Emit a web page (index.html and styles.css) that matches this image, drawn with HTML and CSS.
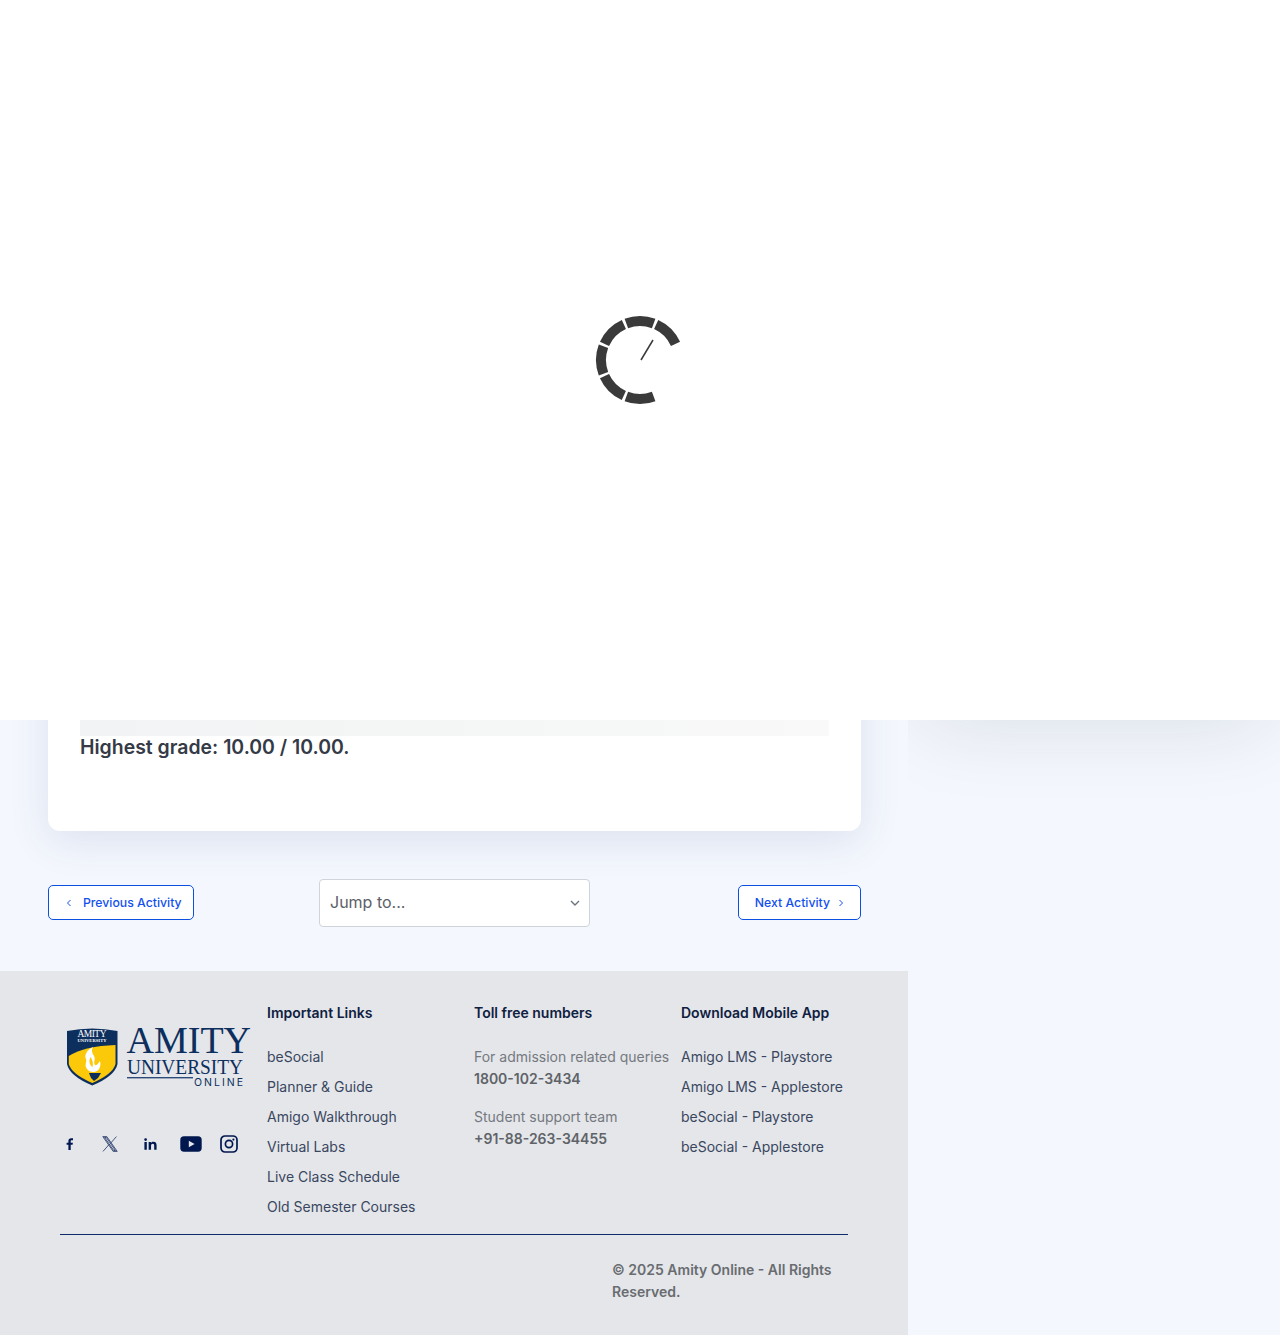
FILE: index.html

```html
<!DOCTYPE html>
<html lang="en">
<head>
  <meta charset="UTF-8" />
  <meta name="viewport" content="width=device-width, initial-scale=1.0"/>
  <title>Amity Online</title>
  <link rel="stylesheet" href="styles.css">
</head>
<body>
  <div id="loader">
    <svg class="spinner" width="96" height="96" viewBox="0 0 96 96">
      <circle class="spinner-ring" cx="48" cy="48" r="39" pathLength="360" transform="rotate(69.5 48 48)"/>
      <line class="spinner-hand" x1="49" y1="48" x2="61" y2="28"/>
    </svg>
  </div>

  <div class="page">
    <div class="main">
      <div class="card">
        <div class="strip"></div>
        <div class="grade">Highest grade: 10.00 / 10.00.</div>
      </div>

      <div class="activity-nav">
        <a class="nav-btn nav-prev" href="#">
          <svg width="6" height="8" viewBox="0 0 6 8"><path d="M4.5 1 L1.5 4 L4.5 7"/></svg>
          Previous Activity
        </a>
        <div class="jump">
          <select class="jump-select">
            <option>Jump to...</option>
          </select>
          <svg class="jump-arrow" width="10" height="6" viewBox="0 0 10 6"><path d="M1 1 L5 5 L9 1"/></svg>
        </div>
        <a class="nav-btn nav-next" href="#">
          Next Activity
          <svg width="6" height="8" viewBox="0 0 6 8"><path d="M1.5 1 L4.5 4 L1.5 7"/></svg>
        </a>
      </div>

      <footer class="footer">
        <div class="footer-cols">
          <div class="brand">
            <svg class="logo" width="205" height="74" viewBox="0 -4 205 74">
              <path d="M7 9 Q32 4 57.5 9 L57.5 42 Q55 54 32.3 63.5 Q9.5 54 7 42 Z" fill="#0d2f5e"/>
              <path d="M8.8 34 Q25 24 55.5 23 L55.5 42 Q53 52 32.3 61 Q11.5 52 8.8 42 Z" fill="#fcc80a"/>
              <path d="M33 25 C27 28 24 33 26 37 C27 41 24 43 27 47 C29 50 34 51 37 49 C40 47 41 43 40 39 C38 42 36 44 35 43 C33 40 36 37 34 34 C32 31 31 28 33 25 Z" fill="#fff"/>
              <path d="M30.5 35 C28.5 39 29.5 43 32.5 45 C33.5 41 32.5 38 30.5 35 Z" fill="#fcc80a"/>
              <path d="M29 51 L41 51 L38 56 L34 59 L31 56 Z" fill="#0d2f5e"/>
              <text x="17.5" y="15" class="logo-mini" textLength="29" font-size="9.5">AMITY</text>
              <text x="17.5" y="19.8" class="logo-mini" textLength="29" font-size="4.5" font-weight="700">UNIVERSITY</text>
              <text x="66.5" y="31" class="logo-serif" font-size="38">AMITY</text>
              <text x="67" y="52" class="logo-serif" font-size="20" textLength="116" lengthAdjust="spacingAndGlyphs">UNIVERSITY</text>
              <rect x="67" y="55" width="66" height="1.4" fill="#2b4a7a"/>
              <text x="134" y="64" class="logo-online" font-size="10.5" textLength="49">ONLINE</text>
            </svg>
            <div class="social">
              <a href="#"><svg width="8" height="12" viewBox="0 0 8 12"><path d="M2.4 12 V6.7 H0.6 V4.7 H2.4 V3.1 C2.4 1.2 3.5 0.3 5.1 0.3 H7 V2.3 H5.8 C5 2.3 4.7 2.6 4.7 3.3 V4.7 H6.9 L6.6 6.7 H4.7 V12 Z"/></svg></a>
              <a href="#"><svg width="16" height="16" viewBox="0 0 16 16"><path class="x-line" d="M0.8 0.6 H4.8 L15.2 15.4 H11.2 Z M2.6 1.5 L11.7 14.5 H13.4 L4.3 1.5 Z M14.4 0.6 L8.9 6.9 M1 15.4 L6.9 8.7"/></svg></a>
              <a href="#"><svg width="13" height="12" viewBox="0 0 14 13"><path d="M0.4 4.2 H3 V12.6 H0.4 Z M1.7 0.2 A1.5 1.5 0 1 1 1.7 3.2 A1.5 1.5 0 1 1 1.7 0.2 Z M5 4.2 H7.5 V5.4 C8 4.5 9 4 10.2 4 C12.8 4 13.6 5.6 13.6 8 V12.6 H11 V8.5 C11 7.3 10.7 6.3 9.5 6.3 C8.2 6.3 7.6 7.2 7.6 8.5 V12.6 H5 Z"/></svg></a>
              <a class="social-yt" href="#"><svg width="22" height="16" viewBox="0 0 22 16"><path d="M4 0.3 H18 Q21.7 0.3 21.7 4 V12 Q21.7 15.7 18 15.7 H4 Q0.3 15.7 0.3 12 V4 Q0.3 0.3 4 0.3 Z"/><path d="M8.8 4.8 L14.6 8 L8.8 11.2 Z" fill="#e4e6ea"/></svg></a>
              <a class="social-ig" href="#"><svg width="18" height="18" viewBox="0 0 18 18"><rect class="ig-line" x="1" y="1" width="16" height="16" rx="4"/><circle class="ig-line" cx="9" cy="9" r="3.6"/><circle cx="13.4" cy="4.6" r="1.1"/></svg></a>
            </div>
          </div>

          <div class="col">
            <h4>Important Links</h4>
            <a class="link" href="#">beSocial</a>
            <a class="link" href="#">Planner &amp; Guide</a>
            <a class="link" href="#">Amigo Walkthrough</a>
            <a class="link" href="#">Virtual Labs</a>
            <a class="link" href="#">Live Class Schedule</a>
            <a class="link" href="#">Old Semester Courses</a>
          </div>

          <div class="col">
            <h4 class="contact-title">Toll free numbers</h4>
            <div class="contact">
              <span>For admission related queries</span>
              <b>1800-102-3434</b>
            </div>
            <div class="contact">
              <span>Student support team</span>
              <b>+91-88-263-34455</b>
            </div>
          </div>

          <div class="col">
            <h4>Download Mobile App</h4>
            <a class="link" href="#">Amigo LMS - Playstore</a>
            <a class="link" href="#">Amigo LMS - Applestore</a>
            <a class="link" href="#">beSocial - Playstore</a>
            <a class="link" href="#">beSocial - Applestore</a>
          </div>
        </div>
        <div class="copyright">
          <p>© 2025 Amity Online - All Rights Reserved.</p>
        </div>
      </footer>
    </div>

    <aside class="side">
      <div class="side-card"></div>
    </aside>
  </div>
</body>
</html>
```

FILE: styles.css

```css
* {
  box-sizing: border-box;
}
body {
  margin: 0;
  height: 1335px;
  overflow: hidden;
  font-family: Inter, 'Liberation Sans', sans-serif;
  font-size: 14px;
  background: #f4f7fd;
  color: #343a40;
}
a {
  text-decoration: none;
}

#loader {
  position: fixed;
  top: 0;
  left: 0;
  z-index: 10;
  width: 100%;
  height: 720px;
  display: flex;
  align-items: center;
  justify-content: center;
  background: #fff;
}
.spinner-ring {
  fill: none;
  stroke: #3a3a3a;
  stroke-width: 10;
  stroke-dasharray: 41 4 41 4 41 4 41 4 41 4 41 94;
}
.spinner-hand {
  stroke: #3a3a3a;
  stroke-width: 1.5;
}

.page {
  display: flex;
  height: 1335px;
}
.main {
  width: 908px;
  flex-shrink: 0;
  padding-top: 40px;
  display: flex;
  flex-direction: column;
}
.side {
  flex: 1;
  overflow: hidden;
  padding: 40px 15px 0;
}
.side-card {
  height: 650px;
  background: #fff;
  box-shadow: 0 30px 80px rgba(30, 60, 60, 0.13);
}

.card {
  margin: 0 47px 0 48px;
  height: 791px;
  padding: 32px 32px 0;
  background: #fff;
  border-radius: 12px;
  box-shadow: 0 10px 40px rgba(50, 70, 140, 0.12);
}
.strip {
  height: 664px;
  background: linear-gradient(90deg, #f1f3f4, #f8f9f8);
}
.grade {
  font-size: 19.44px;
  font-weight: 600;
  line-height: 24px;
  color: #343a46;
  margin-top: -1px;
}

.activity-nav {
  margin: 48px 47px 44px 48px;
  display: grid;
  grid-template-columns: 1fr auto 1fr;
  align-items: center;
}
.nav-btn {
  height: 35px;
  margin-top: -1px;
  display: inline-flex;
  align-items: center;
  font-size: 12.25px;
  font-weight: 500;
  color: #1250f0;
  background: #fff;
  border: 1px solid #0b50e0;
  border-radius: 5px;
}
.nav-btn svg {
  fill: none;
  stroke: #1250f0;
  stroke-width: 1;
}
.nav-prev {
  justify-self: start;
  padding: 0 11px 0 17px;
  gap: 11px;
}
.nav-next {
  justify-self: end;
  padding: 0 16px;
  gap: 8px;
}
.jump {
  position: relative;
  width: 271px;
}
.jump-select {
  display: block;
  width: 100%;
  height: 48px;
  padding: 0 10px 2px;
  appearance: none;
  font-family: inherit;
  font-size: 16px;
  color: #5c6167;
  background: #fff;
  border: 1px solid #ced4da;
  border-radius: 4px;
}
.jump-arrow {
  position: absolute;
  top: 21px;
  right: 10px;
  fill: none;
  stroke: #6c757d;
  stroke-width: 1.4;
}

.footer {
  flex: 1;
  padding: 32px 60px 0;
  background: #e4e6ea;
}
.footer-cols {
  display: grid;
  grid-template-columns: repeat(4, 207px);
  height: 232px;
  border-bottom: 1px solid #0d2a6a;
  width: 788px;
}
.logo {
  display: block;
  margin-top: 15px;
}
.logo-serif {
  font-family: 'Liberation Serif', serif;
  fill: #0d2f5e;
}
.logo-mini {
  font-family: 'Liberation Serif', serif;
  fill: #fff;
}
.logo-online {
  font-family: Inter, sans-serif;
  fill: #0d2f5e;
}
.social {
  display: flex;
  margin: 42px 0 0 -10px;
}
.social a {
  width: 40px;
  height: 20px;
  display: flex;
  align-items: center;
  justify-content: center;
}
.social .social-yt {
  margin-left: 1px;
}
.social .social-ig {
  margin-left: -2px;
}
.social svg {
  fill: #00174f;
}
.social .x-line {
  fill: none;
  stroke: #00174f;
  stroke-width: 0.7;
}
.social .ig-line {
  fill: none;
  stroke: #00174f;
  stroke-width: 1.7;
}

.col h4 {
  margin: 0 0 19px;
  font-size: 14px;
  line-height: 20px;
  font-weight: 600;
  color: #0f2040;
}
.col .contact-title {
  margin-bottom: 23px;
}
.link {
  display: block;
  height: 30px;
  line-height: 30px;
  color: #3a4660;
  white-space: nowrap;
}
.contact {
  margin-bottom: 16px;
  line-height: 22px;
  white-space: nowrap;
}
.contact span {
  display: block;
  color: #75797f;
}
.contact b {
  display: block;
  font-weight: 600;
  color: #5f6368;
}

.copyright {
  display: flex;
  justify-content: flex-end;
  width: 788px;
  margin-top: 24px;
}
.copyright p {
  width: 236px;
  margin: 0;
  line-height: 22px;
  font-weight: 600;
  color: #696c70;
}
```
